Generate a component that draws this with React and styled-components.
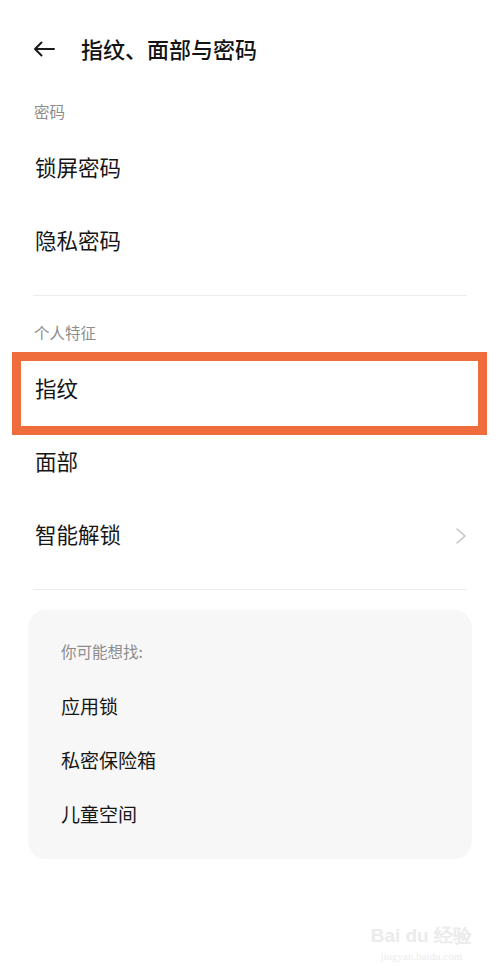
import React from 'react';
import styled, { createGlobalStyle } from 'styled-components';

const GlobalStyle = createGlobalStyle`
  html, body {
    margin: 0;
    padding: 0;
    background: #ffffff;
  }
  body {
    font-family: "Noto Sans CJK SC", "Noto Sans", sans-serif;
    color: #161616;
  }
`;

const Page = styled.div`
  position: relative;
  width: 500px;
  min-height: 975px;
  background: #ffffff;
  overflow: hidden;
`;

const Header = styled.header`
  height: 98px;
  display: flex;
  align-items: center;
  padding-left: 33px;
  gap: 26px;
`;

const BackButton = styled.button`
  border: 0;
  background: none;
  padding: 0;
  width: 22px;
  height: 16px;
  display: flex;
  align-items: center;
  color: #1a1a1a;
`;

const Title = styled.h1`
  margin: 0 0 2px 0;
  font-size: 22px;
  font-weight: 500;
  line-height: 30px;
  color: #141414;
`;

const SectionLabel = styled.div`
  height: 30px;
  line-height: 26px;
  padding-left: 34px;
  margin-top: ${({ $top }) => $top || 0}px;
  margin-bottom: 4px;
  font-size: 15.5px;
  color: #8c8c8c;
`;

const Row = styled.div`
  position: relative;
  height: 73px;
  box-sizing: border-box;
  display: flex;
  align-items: center;
  justify-content: space-between;
  padding: 0 33px 4px 35px;
  font-size: 21.5px;
  color: #161616;
`;

const Highlight = styled.div`
  position: absolute;
  left: 12px;
  right: 13px;
  top: -1px;
  height: 83px;
  box-sizing: border-box;
  border: 9px solid #ef6d3d;
  pointer-events: none;
`;

const Chevron = styled.svg`
  width: 12px;
  height: 18px;
  margin-top: 4px;
  color: #c4c4c4;
`;

const Divider = styled.hr`
  margin: 17px 33px 0 33px;
  border: 0;
  height: 1px;
  background: #ececec;
`;

const SuggestCard = styled.section`
  margin: 20px 28px 0 28px;
  padding: 28px 33px 17px 33px;
  background: #f7f7f7;
  border-radius: 18px;
`;

const SuggestLabel = styled.div`
  height: 28px;
  line-height: 26px;
  font-size: 15.5px;
  color: #8c8c8c;
  margin-bottom: 14px;
`;

const SuggestItem = styled.div`
  height: 54px;
  box-sizing: border-box;
  padding-bottom: 4px;
  display: flex;
  align-items: center;
  font-size: 19px;
  color: #161616;
`;

const Watermark = styled.div`
  position: absolute;
  right: 28px;
  bottom: 12px;
  display: flex;
  flex-direction: column;
  align-items: center;
  color: #ebebeb;
  font-family: "Liberation Sans", Arial, sans-serif;
  pointer-events: none;
`;

const WatermarkBrand = styled.div`
  font-size: 19px;
  font-weight: 700;
  line-height: 26px;
`;

const WatermarkUrl = styled.div`
  font-family: "Liberation Serif", serif;
  font-size: 11px;
  line-height: 14px;
`;

const BackArrow = () => (
  <svg width="22" height="16" viewBox="0 0 22 16" fill="none">
    <path
      d="M21 8H2M8.5 1.5L2 8l6.5 6.5"
      stroke="currentColor"
      strokeWidth="2"
      strokeLinecap="round"
      strokeLinejoin="round"
    />
  </svg>
);

const passwordItems = ['锁屏密码', '隐私密码'];
const suggestions = ['应用锁', '私密保险箱', '儿童空间'];

export default function App() {
  return (
    <Page>
      <GlobalStyle />
      <Header>
        <BackButton aria-label="返回">
          <BackArrow />
        </BackButton>
        <Title>指纹、面部与密码</Title>
      </Header>

      <SectionLabel>密码</SectionLabel>
      {passwordItems.map((item) => (
        <Row key={item}>{item}</Row>
      ))}
      <Divider />

      <SectionLabel $top={23}>个人特征</SectionLabel>
      <Row>
        指纹
        <Highlight />
      </Row>
      <Row>面部</Row>
      <Row>
        智能解锁
        <Chevron viewBox="0 0 12 18" fill="none">
          <path d="M2 2l8 7-8 7" stroke="currentColor" strokeWidth="1.6" strokeLinecap="round" strokeLinejoin="round" />
        </Chevron>
      </Row>
      <Divider />

      <SuggestCard>
        <SuggestLabel>你可能想找:</SuggestLabel>
        {suggestions.map((item) => (
          <SuggestItem key={item}>{item}</SuggestItem>
        ))}
      </SuggestCard>

      <Watermark>
        <WatermarkBrand>Bai du 经验</WatermarkBrand>
        <WatermarkUrl>jingyan.baidu.com</WatermarkUrl>
      </Watermark>
    </Page>
  );
}
